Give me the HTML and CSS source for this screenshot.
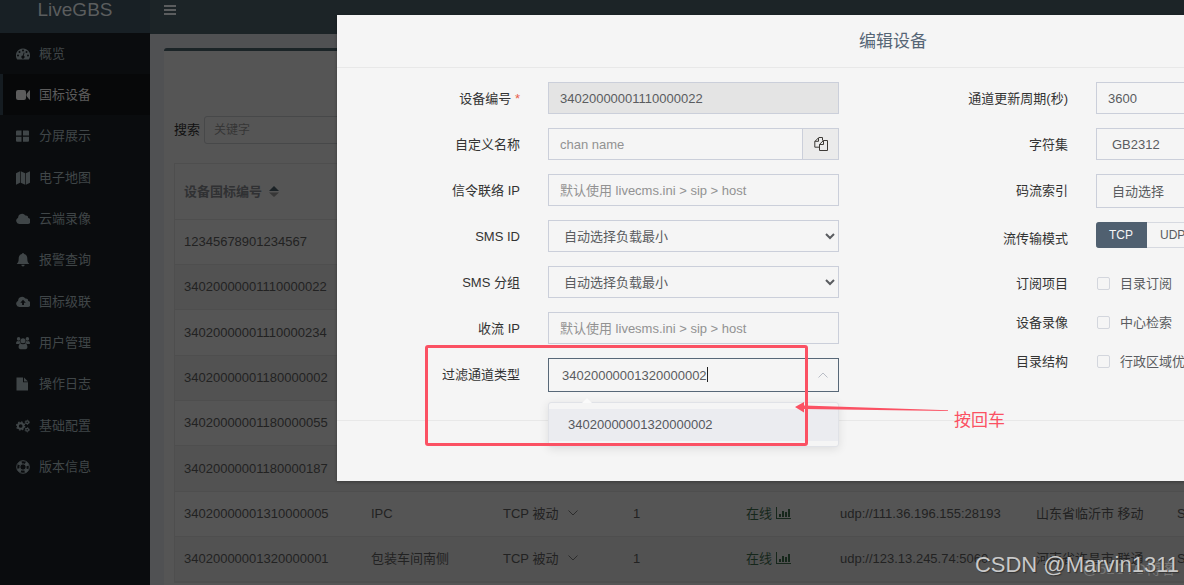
FILE: index.html
```html
<!DOCTYPE html>
<html lang="zh-CN">
<head>
<meta charset="utf-8">
<title>LiveGBS</title>
<link rel="stylesheet" href="styles.css">
</head>
<body>
<div class="app">
  <aside class="sidebar">
    <a class="logo" href="#">LiveGBS</a>
    <nav>
      <ul class="menu">
        <li><a href="#"><svg class="icon" viewBox="0 0 14 14"><path fill-rule="evenodd" d="M7 1.500a7 7 0 0 0-6 10.700q.2.300.6.300h10.800q.4 0 .6-.300A7 7 0 0 0 7 1.500zM2 7.500a1 1 0 1 1 0 2 1 1 0 0 1 0-2zM3.500 4a1 1 0 1 1 0 2 1 1 0 0 1 0-2zM7 2.500a1 1 0 1 1 0 2 1 1 0 0 1 0-2zM10.500 4a1 1 0 1 1 0 2 1 1 0 0 1 0-2zM12 7.500a1 1 0 1 1 0 2 1 1 0 0 1 0-2zM7.700 5.500l.8.200-.8 3.100a1.500 1.500 0 1 1-.8-.200z"/></svg>概览</a></li>
        <li class="active"><a href="#"><svg class="icon" viewBox="0 0 14 14"><path d="M2 2h6q2 0 2 2v6q0 2-2 2H2q-2 0-2-2V4q0-2 2-2zM10.500 6l2.800-3.500q.7-.4.700.4v8.200q0 .8-.7.400l-2.800-3.500z"/></svg>国标设备</a></li>
        <li><a href="#"><svg class="icon" viewBox="0 0 14 14"><path d="M1 1.500h4.500v5H0v-4q0-1 1-1zM7 1.500h5q1 0 1 1v4H7zM0 7.700h5.500v5H1q-1 0-1-1zM7 7.700h6v4q0 1-1 1H7z"/></svg>分屏展示</a></li>
        <li><a href="#"><svg class="icon" viewBox="0 0 14 14"><path d="M0 2.300L4 .300v11.400l-4 2zM4.700.300l4.500 2v11.400l-4.500-2zM9.900 2.300l4.100-2v11.400l-4.100 2z"/></svg>电子地图</a></li>
        <li><a href="#"><svg class="icon" viewBox="0 0 14 14"><path d="M3.300 12a3.300 3.300 0 0 1-1.200-6.300A4 4 0 0 1 9.400 3.500a2.200 2.200 0 0 1 2.700 2.600A3 3 0 0 1 11 12z"/></svg>云端录像</a></li>
        <li><a href="#"><svg class="icon" viewBox="0 0 14 14"><path d="M6 1a1 1 0 0 1 2 0c2.500.5 3.300 2.400 3.300 4.500 0 3 .7 4.400 2 5.500H.7c1.300-1.100 2-2.500 2-5.500C2.700 3.400 3.500 1.500 6 1zM5.300 11.700h3.400a1.700 1.700 0 0 1-3.400 0z"/></svg>报警查询</a></li>
        <li><a href="#"><svg class="icon" viewBox="0 0 14 14"><path fill-rule="evenodd" d="M3.300 12a3.300 3.300 0 0 1-1.200-6.300A4 4 0 0 1 9.400 3.500a2.200 2.200 0 0 1 2.700 2.600A3 3 0 0 1 11 12zM7 4.800L4.300 7.700h1.800V10h1.900V7.700h1.800z"/></svg>国标级联</a></li>
        <li><a href="#"><svg class="icon" viewBox="0 0 15 14"><circle cx="2.800" cy="2.600" r="1.900"/><circle cx="12.200" cy="2.600" r="1.900"/><circle cx="7.500" cy="4.500" r="2.700"/><path d="M1.300 4.800q1.500.8 3 .1.100 1.500 1 2.300-1.200.1-2 1H1.500Q0 8.200 0 7.200q0-1.700 1.300-2.400zM13.700 4.800q-1.500.8-3 .1-.1 1.500-1 2.300 1.200.1 2 1h1.800q1.500 0 1.500-1 0-1.700-1.300-2.400zM4.700 7.500q2.800 1.700 5.600 0 2 .6 2 3.900 0 2.300-2 2.300H4.700q-2 0-2-2.300 0-3.300 2-3.900z"/></svg>用户管理</a></li>
        <li><a href="#"><svg class="icon" viewBox="0 0 14 14"><path d="M.500.500H7v4.800h5v8.200H.500zM8 .500l4 4H8z"/></svg>操作日志</a></li>
        <li><a href="#"><svg class="icon" viewBox="0 0 15 14"><circle cx="5" cy="7" r="3" fill="none" stroke="currentColor" stroke-width="2"/><circle cx="5" cy="7" r="4.300" fill="none" stroke="currentColor" stroke-width="1.400" stroke-dasharray="1.700 1.677"/><g fill="none" stroke="currentColor"><circle cx="12" cy="3" r="1.500" stroke-width="1.300"/><circle cx="12" cy="3" r="2.300" stroke-dasharray="1.200 1.209"/><circle cx="12" cy="11" r="1.500" stroke-width="1.300"/><circle cx="12" cy="11" r="2.300" stroke-dasharray="1.200 1.209"/></g></svg>基础配置</a></li>
        <li><a href="#"><svg class="icon" viewBox="0 0 14 14"><g fill="none" stroke="currentColor"><circle cx="7" cy="7" r="6.300"/><circle cx="7" cy="7" r="3.200"/><circle cx="7" cy="7" r="4.800" stroke-width="3" stroke-dasharray="3.770 3.770" stroke-dashoffset="-1.885"/></g></svg>版本信息</a></li>
      </ul>
    </nav>
  </aside>
  <div class="page">
    <header class="topbar">
      <button class="toggle" type="button" aria-label="菜单"><svg viewBox="0 0 12 10"><path d="M0 0h12v2H0zM0 4h12v2H0zM0 8h12v2H0z"/></svg></button>
    </header>
    <main class="box">
      <form class="search">
        <label for="keyword">搜索</label>
        <input id="keyword" type="text" placeholder="关键字">
      </form>
      <table class="devices">
        <colgroup><col class="c-id"><col class="c-name"><col class="c-mode"><col class="c-count"><col class="c-state"><col class="c-addr"><col class="c-place"><col></colgroup>
        <thead>
          <tr><th colspan="8">设备国标编号 <svg class="sort" viewBox="0 0 10 11"><path d="M0 5l5-5 5 5z" fill="#1b2226"/><path d="M0 6.500h10l-5 4.500z" fill="#373737"/></svg></th></tr>
        </thead>
        <tbody>
          <tr><td colspan="8">12345678901234567</td></tr>
          <tr><td colspan="8">34020000001110000022</td></tr>
          <tr><td colspan="8">34020000001110000234</td></tr>
          <tr><td colspan="8">34020000001180000002</td></tr>
          <tr><td colspan="8">34020000001180000055</td></tr>
          <tr><td colspan="8">34020000001180000187</td></tr>
          <tr><td>34020000001310000005</td><td>IPC</td><td>TCP 被动 <svg class="down" viewBox="0 0 10 6"><path d="M.500.500L5 5l4.500-4.500"/></svg></td><td>1</td><td class="online">在线 <svg class="chart" viewBox="0 0 15 12"><path d="M0 0h1v11h14v1H0zM3 7h2v3H3zM6 4h2v6H6zM9 5h2v5H9zM12 2h2v8h-2z"/></svg></td><td>udp://111.36.196.155:28193</td><td>山东省临沂市 移动</td><td>S</td></tr>
          <tr><td>34020000001320000001</td><td>包装车间南侧</td><td>TCP 被动 <svg class="down" viewBox="0 0 10 6"><path d="M.500.500L5 5l4.500-4.500"/></svg></td><td>1</td><td class="online">在线 <svg class="chart" viewBox="0 0 15 12"><path d="M0 0h1v11h14v1H0zM3 7h2v3H3zM6 4h2v6H6zM9 5h2v5H9zM12 2h2v8h-2z"/></svg></td><td>udp://123.13.245.74:5060</td><td>河南省许昌市 联通</td><td>S</td></tr>
        </tbody>
      </table>
    </main>
  </div>
</div>

<section class="modal" role="dialog" aria-labelledby="modal-title">
  <h1 class="modal-title" id="modal-title">编辑设备</h1>
  <form class="fields">
    <div class="column">
      <div class="row"><label for="f-id">设备编号 <span class="required">*</span></label><input class="control" id="f-id" type="text" value="34020000001110000022" disabled></div>
      <div class="row"><label for="f-name">自定义名称</label><div class="group"><input class="control" id="f-name" type="text" placeholder="chan name"><button class="copy" type="button" aria-label="复制"><svg viewBox="0 0 14 14"><path d="M4.500 3.500V1l.500-.500h3.500v3M4.500.800L.800 4.500v5.700h4.700M.800 4.300h3.700V.800M9.500 3.500h4v10h-8V7.300zM9.500 3.500v4h-4"/></svg></button></div></div>
      <div class="row"><label for="f-sip">信令联络 IP</label><input class="control" id="f-sip" type="text" placeholder="默认使用 livecms.ini &gt; sip &gt; host"></div>
      <div class="row"><label for="f-sms">SMS ID</label><select class="control" id="f-sms"><option>自动选择负载最小</option></select></div>
      <div class="row"><label for="f-group">SMS 分组</label><select class="control" id="f-group"><option>自动选择负载最小</option></select></div>
      <div class="row"><label for="f-recv">收流 IP</label><input class="control" id="f-recv" type="text" placeholder="默认使用 livesms.ini &gt; sip &gt; host"></div>
      <div class="row"><label for="f-filter">过滤通道类型</label>
        <div class="combo">
          <input class="control tall focused" id="f-filter" type="text" value="34020000001320000002">
          <span class="caret"></span>
          <svg class="up" viewBox="0 0 10 6"><path d="M.500 5.500L5 1l4.500 4.500"/></svg>
          <div class="dropdown"><button class="option" type="button">34020000001320000002</button></div>
        </div>
      </div>
    </div>
    <div class="column">
      <div class="row"><label for="f-period">通道更新周期(秒)</label><input class="control" id="f-period" type="text" value="3600"></div>
      <div class="row"><label for="f-charset">字符集</label><select class="control" id="f-charset"><option>GB2312</option></select></div>
      <div class="row"><label for="f-stream">码流索引</label><select class="control tall" id="f-stream"><option>自动选择</option></select></div>
      <div class="row transport"><span class="label">流传输模式</span>
        <div class="segments">
          <label class="segment"><input type="radio" name="transport" checked><span>TCP</span></label>
          <label class="segment"><input type="radio" name="transport"><span>UDP</span></label>
        </div>
      </div>
      <div class="row check"><span class="label">订阅项目</span><label class="tick"><input type="checkbox">目录订阅</label></div>
      <div class="row check"><span class="label">设备录像</span><label class="tick"><input type="checkbox">中心检索</label></div>
      <div class="row check"><span class="label">目录结构</span><label class="tick"><input type="checkbox">行政区域优先</label></div>
    </div>
  </form>
  <footer class="modal-footer"></footer>
</section>

<div class="callout"></div>
<svg class="arrow" viewBox="0 0 154 12"><path d="M0 6L9 1v3.500L153 9.300v.7L9 8v3.500z"/></svg>
<p class="note">按回车</p>
<p class="mark-small">@51CTO博客</p>
<p class="mark">CSDN @Marvin1311</p>
</body>
</html>
```
FILE: styles.css
```css
* { box-sizing: border-box; }

body {
  margin: 0;
  height: 100vh;
  overflow: hidden;
  position: relative;
  background: #505153;
  color: #222;
  font: 13px/20px "Liberation Sans", "Noto Sans CJK SC", sans-serif;
}

input, select, button { font: inherit; }
p { margin: 0; }

.app { display: flex; height: 100%; overflow: hidden; }

/* Sidebar */
.sidebar { flex: 0 0 150px; background: #0a0c0e; }

.logo {
  display: block;
  height: 33px;
  background: #182025;
  color: #5b5d5e;
  font-size: 19px;
  line-height: 20px;
  text-align: center;
  text-decoration: none;
}

.menu { margin: 0; padding: 0; list-style: none; }
.menu li { height: 41px; border-left: 3px solid transparent; }
.menu li:nth-child(3n) { margin-bottom: 1px; }
.menu .active { background: #070809; border-left-color: #151c21; }

.menu a {
  display: flex;
  align-items: center;
  gap: 9px;
  height: 100%;
  padding-left: 13px;
  color: #404648;
  text-decoration: none;
}
.menu .active a { color: #5c5c5c; }
.icon { width: 14px; height: 14px; fill: currentColor; }

/* Page behind the dialog */
.page { flex: 1; min-width: 0; }
.topbar { height: 34px; background: #1c2427; }

.toggle {
  display: block;
  padding: 5px 14px;
  border: 0;
  background: none;
}
.toggle svg { display: block; width: 12px; height: 10px; fill: #5b5d5e; }

.box {
  margin: 14px 0 0 14px;
  padding: 65px 0 0 10px;
  border-top: 3px solid #1b2427;
  border-radius: 3px 0 0 0;
  background: #555;
  height: 100%;
  overflow: hidden;
}

.search { display: flex; align-items: center; gap: 4px; color: #111; }

.search input {
  flex: 1;
  height: 28px;
  padding: 0 9px;
  border: 1px solid #474849;
  border-radius: 3px 0 0 3px;
  background: #555;
  font-size: 12px;
}
.search input::placeholder { color: #363636; }

.devices {
  width: 100%;
  min-width: 1100px;
  margin-top: 19px;
  border-collapse: separate;
  border-spacing: 0;
  border: 1px solid #4e4e4e;
  border-right: 0;
  table-layout: fixed;
}
.devices th, .devices td {
  height: 45px;
  padding: 0 9px;
  border-bottom: 1px solid #4e4e4e;
  text-align: left;
  white-space: nowrap;
}
.devices th { height: 56px; color: #303133; font-weight: bold; }
.devices tr:nth-child(3n) td { height: 46px; }
.devices tbody tr:nth-child(even) { background: #525252; }

.c-id { width: 187px; }
.c-name { width: 132px; }
.c-mode { width: 130px; }
.c-count { width: 113px; }
.c-state { width: 94px; }
.c-addr { width: 196px; }
.c-place { width: 141px; }

.sort { width: 10px; height: 11px; margin-left: 3px; vertical-align: -1px; }
.down { width: 10px; height: 6px; margin-left: 6px; vertical-align: 2px; fill: none; stroke: #2c2c2c; }
.online { color: #16271b; }
.chart { width: 15px; height: 12px; vertical-align: -1px; fill: currentColor; }

/* Dialog */
.modal {
  position: absolute;
  top: 15px;
  left: 337px;
  right: -265px;
  background: #f5f5f5;
  box-shadow: 0 1px 3px rgba(0, 0, 0, .3);
}

.modal-title {
  margin: 0;
  padding: 15px 0 13px;
  border-bottom: 1px solid #e8e8e8;
  color: #556575;
  font-size: 17px;
  font-weight: normal;
  line-height: 24px;
  text-align: center;
}

.fields {
  display: grid;
  grid-template-columns: 1fr 1fr;
  column-gap: 46px;
  padding: 14px 62px 28px 0;
}
.column { display: flex; flex-direction: column; gap: 14px; }
.row { display: flex; align-items: flex-start; gap: 28px; }

.row > label:first-child, .label {
  flex: 0 0 183px;
  line-height: 34px;
  height: 32px;
  text-align: right;
  color: #333;
}
.required { color: #e8604c; }

.control {
  flex: 1;
  min-width: 0;
  width: 100%;
  height: 32px;
  padding: 0 11px;
  border: 1px solid #cbcfda;
  border-radius: 0;
  outline: 0;
  background: #f5f5f5;
  color: #5a5c60;
}
.control::placeholder { color: #929292; }
.control:disabled { background: #e4e4e4; }
.control.tall { height: 34px; }
.control.focused { padding-left: 13px; border-color: #586878; }

.group { flex: 1; display: flex; }
.copy {
  width: 36px;
  height: 32px;
  padding: 0 11px;
  border: 1px solid #cbcfda;
  border-left: 0;
  background: #ebebeb;
}
.copy svg { display: block; width: 14px; height: 14px; fill: none; stroke: #3d3a36; }

.combo { flex: 1; position: relative; }
.caret { position: absolute; top: 9px; left: 159px; width: 1px; height: 15px; background: #222; }
.up { position: absolute; top: 14px; right: 11px; width: 10px; height: 6px; fill: none; stroke: #b9bdc6; }

.dropdown {
  position: absolute;
  top: 44px;
  left: 0;
  right: 0;
  padding: 6px 0 5px;
  border: 1px solid #e0e2e7;
  border-radius: 3px;
  background: #f5f5f5;
  box-shadow: 0 2px 10px rgba(0, 0, 0, .1);
}
.dropdown::before {
  content: "";
  position: absolute;
  top: -5px;
  left: 33px;
  border: 5px solid transparent;
  border-top: 0;
  border-bottom-color: #fafafa;
}
.option {
  display: block;
  width: 100%;
  height: 32px;
  padding: 0 19px;
  border: 0;
  background: #ebecf0;
  color: #55585e;
  text-align: left;
}

.transport { margin-bottom: 3px; }
.segments { display: flex; color: #5a5c60; font-size: 12px; }
.segment { position: relative; }
.segment input { position: absolute; inset: 0; margin: 0; opacity: 0; }
.segment span {
  display: block;
  padding: 0 13px;
  border: 1px solid #d6d9e0;
  border-left: 0;
  line-height: 24px;
}
.segment:first-child span { border-radius: 3px 0 0 3px; }
.segment input:checked + span { border-color: #506070; background: #506070; color: #f5f5f5; }

.row.check { height: 25px; align-items: center; }
.row.check .label { line-height: 32px; }
.tick { display: flex; align-items: center; gap: 10px; white-space: nowrap; color: #5a5c60; }
.tick input {
  appearance: none;
  width: 13px;
  height: 13px;
  margin: 0 0 0 1px;
  border: 1px solid #d3d6dd;
  border-radius: 2px;
}

.modal-footer { height: 61px; border-top: 1px solid #e8e8e8; }

/* Annotations */
.callout {
  position: absolute;
  top: 345px;
  left: 425px;
  width: 383px;
  height: 101px;
  border: 3px solid #fb5163;
  border-radius: 3px;
}
.arrow { position: absolute; top: 401px; left: 795px; width: 154px; height: 12px; fill: #fb5163; }
.note { position: absolute; top: 409px; left: 954px; color: #fb5163; font-size: 17px; line-height: 24px; }

.mark, .mark-small { position: absolute; white-space: nowrap; }
.mark {
  right: 5px;
  bottom: 6px;
  color: #c9c9c9;
  font-size: 22px;
  line-height: 28px;
  text-shadow: 1px 1px 1px #333;
}
.mark-small { right: 8px; bottom: 6px; color: #777; font-size: 15px; line-height: 20px; }
```
